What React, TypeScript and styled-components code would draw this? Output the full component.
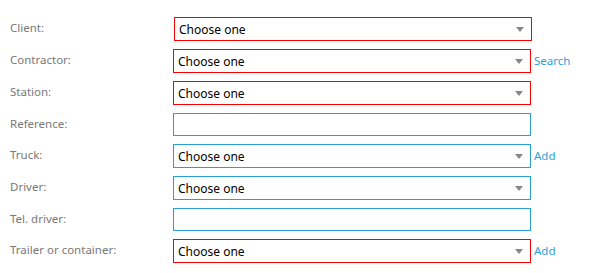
import React from "react";
import styled, { createGlobalStyle } from "styled-components";

const Global = createGlobalStyle`
  html, body { margin: 0; padding: 0; background: #fff; }
  body { font-family: "Noto Sans", "Open Sans", sans-serif; }
`;

const Form = styled.div`
  display: flex;
  flex-direction: column;
  gap: 8px;
  padding: 17px 0 0 10px;
  width: 580px;
`;

const Row = styled.div`
  display: grid;
  grid-template-columns: 163px auto auto;
  align-items: center;
  justify-content: start;
`;

const Label = styled.div`
  font-size: 11.5px;
  color: #787878;
  padding-bottom: 3px;
  white-space: nowrap;
`;

const Field = styled.div<{ $invalid?: boolean; $short?: boolean; $shift?: number }>`
  box-sizing: border-box;
  width: 358px;
  height: ${(p) => (p.$short ? 23 : 24)}px;
  margin-left: ${(p) => p.$shift ?? 0}px;
  border: 1px solid ${(p) => (p.$invalid ? "#ff0000" : "#2a9fd6")};
  background: #fff;
  display: flex;
  align-items: center;
  justify-content: space-between;
  padding: 0 7px 0 4px;
  font-size: 12px;
  color: #000;
`;

const Arrow = styled.span`
  width: 0;
  height: 0;
  border-left: 4px solid transparent;
  border-right: 4px solid transparent;
  border-top: 5px solid #888;
`;

const Link = styled.a`
  margin-left: 3px;
  font-size: 11.5px;
  color: #2ea0dc;
  text-decoration: none;
  padding-bottom: 1px;
`;

type Item = {
  label: string;
  select: boolean;
  invalid: boolean;
  link?: string;
  shift?: number;
};

const items: Item[] = [
  { label: "Client:", select: true, invalid: true, shift: 1 },
  { label: "Contractor:", select: true, invalid: true, link: "Search" },
  { label: "Station:", select: true, invalid: true },
  { label: "Reference:", select: false, invalid: false },
  { label: "Truck:", select: true, invalid: false, link: "Add" },
  { label: "Driver:", select: true, invalid: false },
  { label: "Tel. driver:", select: false, invalid: false },
  { label: "Trailer or container:", select: true, invalid: true, link: "Add" },
];

export default function App() {
  return (
    <>
      <Global />
      <Form>
        {items.map((it) => (
          <Row key={it.label}>
            <Label>{it.label}</Label>
            <Field $invalid={it.invalid} $short={!it.select} $shift={it.shift}>
              {it.select && (
                <>
                  <span>Choose one</span>
                  <Arrow />
                </>
              )}
            </Field>
            {it.link && <Link href="#">{it.link}</Link>}
          </Row>
        ))}
      </Form>
    </>
  );
}
